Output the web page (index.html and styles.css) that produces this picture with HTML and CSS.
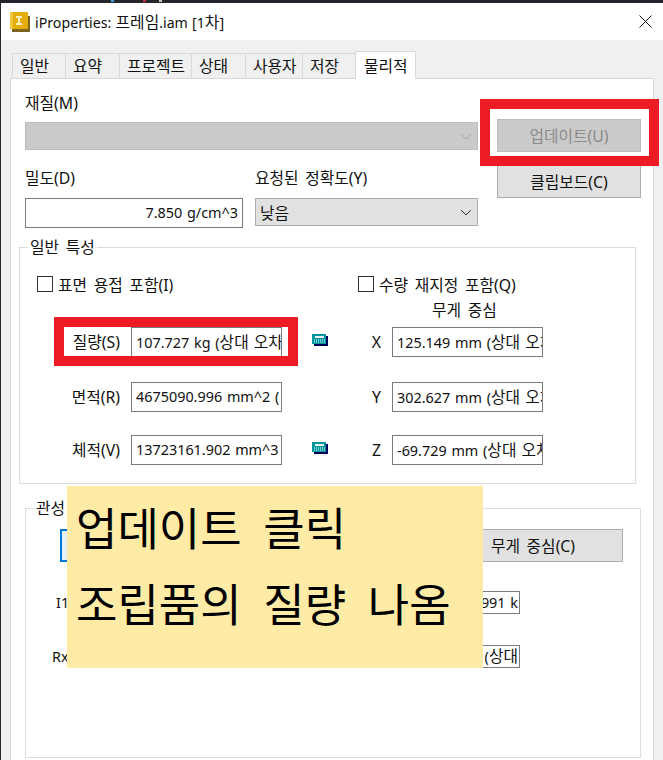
FILE: index.html
```html
<!DOCTYPE html>
<html lang="ko">
<head>
<meta charset="UTF-8" />
<meta name="viewport" content="width=device-width, initial-scale=1" />
<title>iProperties</title>
<link rel="stylesheet" href="styles.css">
</head>
<body>

<div class="desktop-strip">
  <span class="speck speck-blue"></span>
  <span class="speck speck-red"></span>
  <span class="speck speck-white"></span>
</div>

<div class="window">
  <div class="titlebar">
    <svg class="app-icon" width="20" height="20" viewBox="0 0 20 20">
      <rect x="2" y="4" width="18" height="16" fill="#7d6520" />
      <rect x="0" y="0" width="18" height="17" rx="1" fill="#e3ae0c" />
      <rect x="0" y="0" width="3" height="17" fill="#f0c63c" />
      <path d="M6 4h6v2h-2v5h2v2H6v-2h2V6H6z" fill="#fbf0c0" />
    </svg>
    <span class="title-text">iProperties: <span class="ko">프레임</span>.iam [1<span class="ko">차</span>]</span>
    <svg class="close-x" width="13" height="13" viewBox="0 0 13 13">
      <path d="M0.5 0.5L12.5 12.5M12.5 0.5L0.5 12.5" stroke="#111" stroke-width="1" fill="none" />
    </svg>
  </div>

  <div class="tabs">
    <div class="tab tab-1">일반</div>
    <div class="tab tab-2">요약</div>
    <div class="tab tab-3">프로젝트</div>
    <div class="tab tab-4">상태</div>
    <div class="tab tab-5">사용자</div>
    <div class="tab tab-6">저장</div>
    <div class="tab tab-active">물리적</div>
  </div>

  <div class="panel">
    <div class="top-fields">
      <div class="material">
        <div class="field-label">재질(M)</div>
        <div class="select select-disabled">
          <svg class="chevron" width="12" height="7" viewBox="0 0 12 7"><path d="M1 1l5 5 5-5" stroke="#a5a5a5" fill="none" /></svg>
        </div>
      </div>
      <button class="btn btn-disabled btn-update">업데이트(U)</button>

      <div class="density">
        <div class="field-label">밀도(D)</div>
        <div class="input input-right input-density">7.850 g/cm^3</div>
      </div>
      <div class="accuracy">
        <div class="field-label">요청된 정확도(Y)</div>
        <div class="select select-open">낮음
          <svg class="chevron" width="12" height="7" viewBox="0 0 12 7"><path d="M1 1l5 5 5-5" stroke="#333" fill="none" /></svg>
        </div>
      </div>
      <button class="btn btn-clipboard">클립보드(C)</button>
    </div>

    <fieldset class="group group-general">
      <legend>일반 특성</legend>
      <div class="checks">
        <label class="check check-surface"><span class="box"></span>표면 용접 포함(I)</label>
        <label class="check check-qty"><span class="box"></span>수량 재지정 포함(Q)</label>
      </div>
      <div class="cog-title">무게 중심</div>
      <div class="props">
        <div class="prop-label">질량(S)</div>
        <div class="input input-prop">107.727 kg (<span class="ko">상대 오차</span></div>
        <div class="calc-cell"><svg class="calc" width="16" height="12" viewBox="0 0 16 12"><use href="#calc-icon" /></svg></div>
        <div class="axis-label">X</div>
        <div class="input input-prop">125.149 mm (<span class="ko">상대 오차</span></div>

        <div class="prop-label">면적(R)</div>
        <div class="input input-prop">4675090.996 mm^2 (</div>
        <div class="calc-cell"></div>
        <div class="axis-label">Y</div>
        <div class="input input-prop">302.627 mm (<span class="ko">상대 오차</span></div>

        <div class="prop-label">체적(V)</div>
        <div class="input input-prop">13723161.902 mm^3</div>
        <div class="calc-cell"><svg class="calc" width="16" height="12" viewBox="0 0 16 12"><use href="#calc-icon" /></svg></div>
        <div class="axis-label">Z</div>
        <div class="input input-prop">-69.729 mm (<span class="ko">상대 오차</span></div>
      </div>
    </fieldset>

    <fieldset class="group group-inertia">
      <legend>관성</legend>
      <div class="inertia-buttons">
        <button class="btn btn-focus"></button>
        <button class="btn btn-cog">무게 중심(C)</button>
      </div>
      <div class="inertia-row inertia-row-1">
        <span class="inertia-label">I1</span>
        <div class="input input-inertia">991 k</div>
      </div>
      <div class="inertia-row inertia-row-2">
        <span class="inertia-label">Rx</span>
        <div class="input input-inertia">(<span class="ko">상대</span></div>
      </div>
    </fieldset>
  </div>
</div>

<!-- annotations pasted over the screenshot -->
<div class="mark mark-update"></div>
<div class="mark mark-mass"></div>
<div class="note">
  <p>업데이트 클릭</p>
  <p>조립품의 질량 나옴</p>
</div>

<svg width="0" height="0" class="defs">
  <symbol id="calc-icon" viewBox="0 0 16 12">
    <rect x="2" y="2" width="14" height="10" fill="#00005a" />
    <rect x="0" y="0" width="14" height="10" fill="#00969c" />
    <rect x="3" y="2" width="9" height="2" fill="#f0f0f0" />
    <path d="M2 6h1M4 6h1M6 6h1M8 6h1M10 6h1M12 6h1M2 8h1M4 8h1M6 8h1M8 8h1M10 8h1M12 8h1" stroke="#e6ffff" fill="none" />
  </symbol>
</svg>

</body>
</html>
```

FILE: styles.css
```css
* {
  box-sizing: border-box;
}
html, body {
  height: 760px;
}
body {
  margin: 0;
  padding-left: 1px;
  position: relative;
  overflow: hidden;
  background: #23262b;
  font-family: 'Noto Sans', 'Noto Sans CJK KR', sans-serif;
  font-size: 15.8px;
  word-spacing: 2.5px;
  color: #111;
}
/* hangul runs inside latin-sized text */
.ko {
  font-size: 15.8px;
}

/* desktop showing above the window */
.desktop-strip {
  height: 3px;
  position: relative;
}
.speck {
  position: absolute;
  top: 0;
  width: 3px;
  height: 2px;
}
.speck-blue { left: 110px; background: #4a9ad8; }
.speck-red { left: 142px; background: #c0303a; }
.speck-white { left: 158px; background: #c8c8c8; }

.window {
  height: 757px;
  background: #f0f0f0;
}
.titlebar {
  height: 37px;
  background: #fff;
  display: flex;
  align-items: center;
  padding-left: 9px;
}
.title-text {
  margin-left: 5px;
  font-size: 14.2px;
  word-spacing: 0.5px;
}
.close-x {
  margin-left: auto;
  margin-right: 11px;
}

/* tabs */
.tabs {
  display: flex;
  align-items: flex-end;
  height: 38px;
  padding-left: 11px;
}
.tab {
  height: 25px;
  padding-left: 7px;
  line-height: 24px;
  border: 1px solid #d9d9d9;
  border-bottom: 0;
  border-right: 0;
  background: #f0f0f0;
  white-space: nowrap;
}
.tab-1 { width: 53px; }
.tab-2 { width: 54px; }
.tab-3 { width: 72px; }
.tab-4 { width: 54px; }
.tab-5 { width: 57px; }
.tab-6 { width: 53px; }
.tab-active {
  width: 61px;
  height: 28px;
  padding-left: 8px;
  line-height: 28px;
  border: 1px solid #d9d9d9;
  border-bottom: 0;
  background: #fff;
  margin-bottom: -1px;
  position: relative;
  z-index: 1;
}

.panel {
  width: 644px;
  height: 683px;
  margin-left: 9px;
  padding-left: 8px;
  background: #fff;
  border: 1px solid #d9d9d9;
  border-bottom: 0;
}

/* material / density fields */
.top-fields {
  display: grid;
  grid-template-columns: 218px 12px 223px 19px 144px;
  grid-template-rows: 73px 76px;
  padding-left: 6px;
}
.field-label {
  height: 20px;
  line-height: 20px;
  white-space: nowrap;
}
.material {
  grid-column: 1 / 4;
  padding-top: 14px;
}
.material .select {
  margin-top: 9px;
}
.btn-update {
  grid-column: 5;
  margin-top: 40px;
}
.density {
  grid-column: 1;
  padding-top: 16px;
}
.accuracy {
  grid-column: 3;
  padding-top: 16px;
}
.density .input, .accuracy .select {
  margin-top: 10px;
}
.btn-clipboard {
  grid-column: 5;
  margin-top: 13px;
}

.select {
  height: 28px;
  display: flex;
  align-items: center;
  padding-left: 4px;
  background: #e1e1e1;
  border: 1px solid #adadad;
  position: relative;
}
.select-disabled {
  background: #cacaca;
  border-color: #bdbdbd;
}
.chevron {
  position: absolute;
  right: 5px;
  top: 10px;
}
.btn {
  height: 33px;
  padding: 0;
  background: #e1e1e1;
  border: 1px solid #adadad;
  font: inherit;
  word-spacing: inherit;
  color: #111;
}
.btn-disabled {
  background: #cacaca;
  border-color: #bdbdbd;
  color: #8a8a8a;
}
.input {
  height: 30px;
  line-height: 28px;
  padding: 0 4px;
  background: #fff;
  border: 1px solid #7a7a7a;
  overflow: hidden;
  white-space: nowrap;
  font-size: 14.4px;
  word-spacing: 1px;
}
.input-right {
  text-align: right;
}

/* group boxes */
.group {
  margin: 0;
  padding: 0;
  border: 1px solid #dcdcdc;
  min-width: 0;
}
.group legend {
  margin-left: 8px;
  padding: 0 2px;
  line-height: 20px;
}
.group-general {
  width: 617px;
  height: 247px;
  margin-top: 9px;
}
.checks {
  display: flex;
  margin-top: 17px;
  padding-left: 17px;
  height: 20px;
}
.check {
  display: flex;
  align-items: center;
  gap: 5px;
  white-space: nowrap;
}
.check-surface {
  width: 321px;
}
.box {
  width: 16px;
  height: 16px;
  border: 1px solid #333;
  background: #fff;
}
.cog-title {
  margin: 6px 0 0 412px;
  height: 20px;
  line-height: 20px;
}
.props {
  display: grid;
  grid-template-columns: 111px 151px 46px 64px 151px;
  grid-template-rows: 55px 53px 30px;
  margin-top: 7px;
}
.input-prop {
  height: 30px;
}
.prop-label, .axis-label {
  height: 30px;
  text-align: right;
  padding-right: 11px;
  line-height: 30px;
  white-space: nowrap;
}
.calc-cell {
  display: flex;
  justify-content: flex-end;
  align-items: flex-start;
  padding-top: 7px;
}
.calc {
  display: block;
}
.defs {
  position: absolute;
}

.group-inertia {
  width: 616px;
  height: 260px;
  margin: 14px 0 0 6px;
}
.inertia-buttons {
  display: flex;
  justify-content: space-between;
  height: 33px;
  margin-top: 11px;
  padding: 0 17px 0 34px;
}
.btn-focus {
  width: 180px;
  background: #e5f1fb;
  border: 2px solid #0078d7;
}
.btn-cog {
  width: 180px;
}
.inertia-row {
  display: flex;
  justify-content: space-between;
  width: 494px;
  height: 23px;
}
.inertia-row-1 {
  margin-top: 29px;
  padding-left: 30px;
}
.inertia-row-2 {
  margin-top: 31px;
  padding-left: 26px;
}
.inertia-label {
  line-height: 23px;
  font-size: 14.4px;
}
.input-inertia {
  width: 200px;
  height: 23px;
  line-height: 21px;
  padding: 0 1px;
  text-align: right;
}

/* red boxes + yellow note over everything */
.mark {
  position: absolute;
  border: 10px solid #ed1c24;
}
.mark-update {
  left: 480px;
  top: 99px;
  width: 179px;
  height: 67px;
}
.mark-mass {
  left: 54px;
  top: 317px;
  width: 244px;
  height: 49px;
}
.note {
  position: absolute;
  left: 67px;
  top: 486px;
  width: 416px;
  height: 182px;
  background: #fdeba6;
  padding: 14px 0 0 9px;
  font-size: 45px;
  word-spacing: 10px;
  color: #000;
}
.note p {
  margin: 0 0 18px;
  line-height: 58px;
  white-space: nowrap;
}
```
